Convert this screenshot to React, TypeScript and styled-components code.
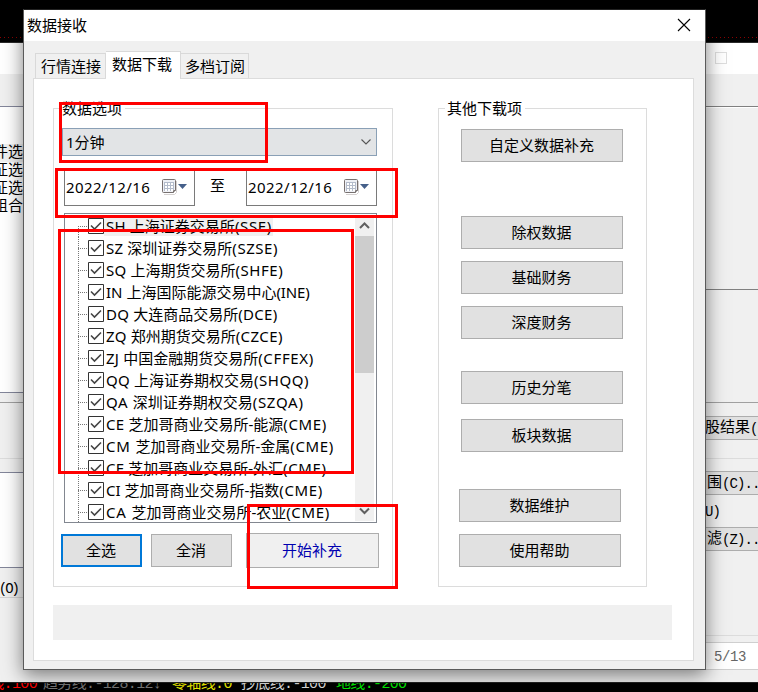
import React from "react";
import styled, { createGlobalStyle, css } from "styled-components";

const Global = createGlobalStyle`
  *, *::before, *::after { box-sizing: border-box; }
  body {
    margin: 0;
    background: #000;
    color: #000;
    font: 15px/18px "Noto Sans", "Noto Sans CJK SC", sans-serif;
  }
`;

const Screen = styled.div`
  position: relative;
  width: 758px;
  height: 692px;
  overflow: hidden;
  background: #000;
`;

/* ---------- window behind the dialog ---------- */

const Ticker = styled.div`
  height: 42px;
  padding-top: 37px;
  &::after {
    content: "";
    display: block;
    height: 1px;
    background: repeating-linear-gradient(90deg, #8c0000 0 1px, transparent 1px 4px);
  }
`;

const BackWindow = styled.div`
  display: flex;
  justify-content: space-between;
  height: 640px;
  border-top: 1px solid #2a2a2a;
  background: #f0f0f0;
`;

const Side = styled.div<{ $w: number }>`
  display: flex;
  flex-direction: column;
  width: ${(p) => p.$w}px;
  overflow: hidden;
`;

const Band = styled.div<{ $h: number; $bg?: string; $line?: string }>`
  flex: none;
  height: ${(p) => p.$h}px;
  background: ${(p) => p.$bg ?? "#f0f0f0"};
  ${(p) => p.$line && css`border-bottom: 1px solid ${p.$line};`}
`;

const SideItem = styled.div<{ $on?: boolean }>`
  display: flex;
  justify-content: flex-end;
  height: 18px;
  font: 15px/20px "Liberation Mono", "Noto Sans CJK SC", monospace;
  white-space: nowrap;
  background: ${(p) => (p.$on ? "#f0f0f0" : "transparent")};
`;

const SideList = styled.div`
  height: 285px;
  padding-top: 37px;
  background: #fff;
`;

const Mono = styled.div<{ $h: number; $pad?: number; $end?: boolean; $btn?: boolean }>`
  flex: none;
  display: flex;
  align-items: center;
  justify-content: ${(p) => (p.$end ? "flex-end" : "flex-start")};
  height: ${(p) => p.$h}px;
  padding: ${(p) => (p.$end ? `2px ${p.$pad ?? 0}px 0 0` : `2px 0 0 ${p.$pad ?? 0}px`)};
  font: 15px/18px "Liberation Mono", "Noto Sans CJK SC", monospace;
  white-space: nowrap;
  ${(p) => p.$btn && css`
    background: #e1e1e1;
    border: solid #adadad;
    border-width: 1px 0;
  `}
`;

const Narrow = styled.span`
  font-size: 14px;
  letter-spacing: -0.9px;
`;

const Tight = styled.span`
  font-size: 14px;
  letter-spacing: -2px;
`;

const MaxBox = styled.div`
  height: 31px;
  padding: 9px 0 0 10px;
  background: #fff;
  &::after {
    content: "";
    display: block;
    width: 12px;
    height: 12px;
    border: 1px solid #dedede;
  }
`;

const Status = styled.div`
  flex: none;
  display: flex;
  align-items: center;
  height: 28px;
  padding: 2px 0 0 9px;
  border: solid #cfcfcf;
  border-width: 1px 0;
  background: #fff;
  color: #666;
  font: 14px/18px "Liberation Mono", monospace;
  letter-spacing: -0.4px;
`;

const Legends = styled.div`
  display: flex;
  height: 10px;
  overflow: hidden;
  border-top: 1px solid #222;
  font: 15px/20px "Liberation Mono", "Noto Sans CJK SC", monospace;
  white-space: pre;
`;

const Indicator = styled.span<{ $c: string; $w: number; $end?: boolean; $pad?: number }>`
  flex: none;
  display: flex;
  justify-content: ${(p) => (p.$end ? "flex-end" : "flex-start")};
  width: ${(p) => p.$w}px;
  height: 20px;
  margin-top: -8px;
  padding-left: ${(p) => p.$pad ?? 0}px;
  color: ${(p) => p.$c};
  letter-spacing: -0.65px;
`;

/* ---------- dialog ---------- */

const Dialog = styled.section`
  position: absolute;
  left: 23px;
  top: 9px;
  width: 683px;
  height: 661px;
  display: flex;
  flex-direction: column;
  border: 1px solid #5a5a5a;
  border-top-color: #222;
  background: #f0f0f0;
  box-shadow: 0 5px 18px rgba(0, 0, 0, 0.5);
`;

const TitleBar = styled.header`
  display: flex;
  justify-content: space-between;
  height: 31px;
  padding: 6px 14px 0 3px;
  background: #fff;
`;

const CloseIcon = styled.svg`
  width: 14px;
  height: 14px;
  margin-top: 2px;
`;

const Tabs = styled.nav`
  display: flex;
  align-items: flex-end;
  height: 37px;
  padding-left: 11px;
`;

const Tab = styled.div<{ $w: number; $active?: boolean; $pad: number }>`
  width: ${(p) => p.$w}px;
  height: ${(p) => (p.$active ? 28 : 25)}px;
  padding: 3px 0 0 ${(p) => p.$pad}px;
  border: 1px solid #d9d9d9;
  border-bottom: 0;
  background: ${(p) => (p.$active ? "#fff" : "#f0f0f0")};
  white-space: nowrap;
  ${(p) => p.$active ? css`margin-bottom: -1px; z-index: 1;` : css`& + & { border-left: 0; }`}
`;

const Page = styled.div`
  height: 583px;
  width: 661px;
  margin-left: 9px;
  padding: 29px 0 0 19px;
  border: 1px solid #dcdcdc;
  background: #fff;
`;

const Groups = styled.div`
  display: flex;
  gap: 45px;
`;

const Group = styled.div<{ $w: number; $pad: string }>`
  width: ${(p) => p.$w}px;
  height: 479px;
  padding: ${(p) => p.$pad};
  border: 1px solid #dcdcdc;
`;

const Legend = styled.div<{ $w: number; $pad: number }>`
  width: ${(p) => p.$w}px;
  height: 20px;
  margin-top: -11px;
  padding: 1px 0 0 ${(p) => p.$pad}px;
  background: #fff;
  white-space: nowrap;
`;

const Combo = styled.div`
  display: flex;
  align-items: center;
  justify-content: space-between;
  width: 315px;
  height: 28px;
  margin: 10px 0 0 1px;
  padding: 0 5px 1px 3px;
  border: 1px solid #8aa0b6;
  background: #e2e4e6;
`;

const DateRow = styled.div`
  display: flex;
  width: 313px;
  height: 36px;
  margin: 14px 0 0 3px;
`;

const DateField = styled.div`
  display: flex;
  align-items: center;
  width: 131px;
  padding: 0 0 2px 1px;
  border: 1px solid #7a7a7a;
  letter-spacing: 0.45px;
`;

const DateText = styled.span`
  width: 95px;
`;

const Until = styled.span`
  width: 51px;
  padding: 6px 6px 0 0;
  text-align: center;
`;

const ListBox = styled.div`
  display: flex;
  width: 313px;
  height: 310px;
  margin: 7px 0 0 3px;
  padding: 1px 2px 0 0;
  border: 1px solid #828790;
  overflow: hidden;
`;

const Tree = styled.div`
  flex: 1;
  height: 308px;
  padding-left: 13px;
  overflow: hidden;
`;

const Node = styled.div`
  display: flex;
  align-items: center;
  height: 22px;
  background: repeating-linear-gradient(180deg, #777 0 1px, transparent 1px 2px) 0 0 / 1px 22px no-repeat;
  &:first-child { background-position: 0 11px; }
`;

const Branch = styled.span`
  width: 10px;
  height: 1px;
  background: repeating-linear-gradient(90deg, #777 0 1px, transparent 1px 2px);
`;

const Check = styled.svg`
  width: 16px;
  height: 16px;
`;

const NodeLabel = styled.span<{ $on?: boolean }>`
  height: 20px;
  padding: 1px 1px 0 2px;
  background: ${(p) => (p.$on ? "#f0f0f0" : "transparent")};
  white-space: pre;
`;

const Latin = styled.span<{ $ls: number }>`
  letter-spacing: ${(p) => p.$ls}px;
`;

const Scroll = styled.div`
  display: flex;
  flex-direction: column;
  width: 19px;
  height: 306px;
  background: #f0f0f0;
`;

const ScrollArrow = styled.svg`
  flex: none;
  width: 19px;
  height: 21px;
`;

const Thumb = styled.div`
  height: 137px;
  margin-bottom: auto;
  background: #cdcdcd;
`;

const Actions = styled.div`
  display: flex;
  align-items: center;
  height: 35px;
  margin-top: 10px;
`;

const Button = styled.div<{ $w?: number; $kind?: "focus" | "start"; $mt?: number; $ml?: number }>`
  display: flex;
  align-items: center;
  justify-content: center;
  width: ${(p) => p.$w ?? 162}px;
  height: ${(p) => (p.$kind === "start" ? 35 : 33)}px;
  margin: ${(p) => p.$mt ?? 0}px 0 0 ${(p) => p.$ml ?? 0}px;
  padding: 0 1px 1px 0;
  border: ${(p) => (p.$kind === "focus" ? "2px solid #0078d7" : "1px solid #adadad")};
  background: ${(p) => (p.$kind === "start" ? "#f0f0f0" : "#e1e1e1")};
  color: ${(p) => (p.$kind === "start" ? "#0000b0" : "#000")};
`;

const Progress = styled.div`
  width: 619px;
  height: 35px;
  margin-top: 18px;
  background: #f0f0f0;
`;

/* ---------- highlight frames ---------- */

const Frame = styled.div<{ $x: number; $y: number; $w: number; $h: number }>`
  position: absolute;
  left: ${(p) => p.$x}px;
  top: ${(p) => p.$y}px;
  width: ${(p) => p.$w}px;
  height: ${(p) => p.$h}px;
  border: 3px solid #f00;
`;

type Exchange = { code: string; name: string; tag: string; head: number; tail: number };

const exchanges: Exchange[] = [
  { code: "SH", name: "上海证券交易所", tag: "(SSE)", head: 0.2, tail: 0.65 },
  { code: "SZ", name: "深圳证券交易所", tag: "(SZSE)", head: 0.2, tail: 0.55 },
  { code: "SQ", name: "上海期货交易所", tag: "(SHFE)", head: 0.2, tail: 0.55 },
  { code: "IN", name: "上海国际能源交易中心", tag: "(INE)", head: 0, tail: -0.1 },
  { code: "DQ", name: "大连商品交易所", tag: "(DCE)", head: 0.2, tail: 0.3 },
  { code: "ZQ", name: "郑州期货交易所", tag: "(CZCE)", head: 0.2, tail: 0.4 },
  { code: "ZJ", name: "中国金融期货交易所", tag: "(CFFEX)", head: 0.2, tail: 0.65 },
  { code: "QQ", name: "上海证券期权交易", tag: "(SHQQ)", head: 0.2, tail: 0.55 },
  { code: "QA", name: "深圳证券期权交易", tag: "(SZQA)", head: 0.6, tail: 0.7 },
  { code: "CE", name: "芝加哥商业交易所-能源", tag: "(CME)", head: 0.25, tail: 0.65 },
  { code: "CM", name: "芝加哥商业交易所-金属", tag: "(CME)", head: 0.8, tail: 0.65 },
  { code: "CF", name: "芝加哥商业交易所-外汇", tag: "(CME)", head: 0.35, tail: 0.65 },
  { code: "CI", name: "芝加哥商业交易所-指数", tag: "(CME)", head: 0, tail: 0.65 },
  { code: "CA", name: "芝加哥商业交易所-农业", tag: "(CME)", head: 0.8, tail: 0.65 },
];

function CalendarIcon() {
  return (
    <svg width="28" height="18" viewBox="0 0 28 18">
      <path d="M3 16.500h10.500l2-2V3" fill="none" stroke="#d4d0d0" />
      <path d="M1.500 2.500q0-1 1-1h11q1 0 1 1v10l-2 2h-10q-1 0-1-1z" fill="#eef0f5" stroke="#77706f" />
      <path d="M3 4h10v9H3z" fill="#fff" />
      <path d="M3 4.500h10M3 7.500h10M3 10.500h10M3.500 4v9M6.500 4v9M9.500 4v9M12.500 4v8" stroke="#b4bccb" fill="none" />
      <path d="M12.500 14.500v-2h2" fill="#ddd" stroke="#77706f" />
      <path d="M17 6h9l-4.500 5z" fill="#46608a" />
    </svg>
  );
}

function DateInput() {
  return (
    <DateField>
      <DateText>2022/12/16</DateText>
      <CalendarIcon />
    </DateField>
  );
}

export default function App() {
  return (
    <Screen>
      <Global />
      <Ticker />
      <BackWindow>
        <Side $w={23}>
          <Band $h={31} $bg="#fff" />
          <Band $h={33} $line="#83869a" />
          <SideList>
            <SideItem $on>件选</SideItem>
            <SideItem>征选</SideItem>
            <SideItem>征选</SideItem>
            <SideItem>组合</SideItem>
          </SideList>
          <Band $h={1} $bg="#83869a" />
          <Band $h={10} $line="#a0a0a0" />
          <Band $h={56} $line="#dcdcdc" />
          <Band $h={14} $line="#83869a" />
          <Band $h={95} $bg="#fff" $line="#83869a" />
          <Band $h={10} />
          <Mono $h={19} $end $pad={5}><Tight>(O)</Tight></Mono>
          <Band $h={1} $bg="#d4d4d4" />
        </Side>
        <Side $w={53}>
          <MaxBox />
          <Band $h={33} $line="#808080" />
          <Band $h={1} $bg="#fff" />
          <Band $h={182} $line="#808080" />
          <Band $h={113} $line="#a0a0a0" />
          <Band $h={13} />
          <Mono $h={24} $btn>股结果<Narrow>(I)</Narrow></Mono>
          <Band $h={19} $line="#dcdcdc" />
          <Band $h={12} />
          <Mono $h={24} $btn $pad={2}>围<Narrow>(C)...</Narrow></Mono>
          <Mono $h={32}><Narrow>U)</Narrow></Mono>
          <Mono $h={24} $btn $pad={2}>滤<Narrow>(Z)...</Narrow></Mono>
          <Band $h={85} $line="#dcdcdc" />
          <Band $h={6} />
          <Status>5/13</Status>
        </Side>
      </BackWindow>
      <Legends>
        <Indicator $c="#f00" $w={37} $end>线:100</Indicator>
        <Indicator $c="#777" $w={135} $pad={6}>趋势线:-128.12↓</Indicator>
        <Indicator $c="#ee0" $w={69}>零轴线:0</Indicator>
        <Indicator $c="#ddd" $w={95}>抄底线:-100</Indicator>
        <Indicator $c="#0e0" $w={90}>地线:-200</Indicator>
      </Legends>

      <Dialog>
        <TitleBar>
          <span>数据接收</span>
          <CloseIcon viewBox="0 0 14 14">
            <path d="M1 1l12 12M13 1L1 13" stroke="#000" strokeWidth="1.1" />
          </CloseIcon>
        </TitleBar>
        <Tabs>
          <Tab $w={71} $pad={5}>行情连接</Tab>
          <Tab $w={75} $pad={6} $active>数据下载</Tab>
          <Tab $w={68} $pad={4}>多档订阅</Tab>
        </Tabs>
        <Page>
          <Groups>
            <Group $w={340} $pad="0 0 0 7px">
              <Legend $w={64} $pad={1}>数据选项</Legend>
              <Combo>
                1分钟
                <svg width="10" height="6" viewBox="0 0 10 6">
                  <path d="M.5.5L5 5 9.500.5" fill="none" stroke="#555" strokeWidth="1.1" />
                </svg>
              </Combo>
              <DateRow>
                <DateInput />
                <Until>至</Until>
                <DateInput />
              </DateRow>
              <ListBox>
                <Tree>
                  {exchanges.map((x, i) => (
                    <Node key={x.code}>
                      <Branch />
                      <Check viewBox="0 0 16 16">
                        <path d="M.5.5h15v15H.5z" fill="#fff" stroke="#333" />
                        <path d="M3 7.500l3.500 3.500L13 4.500" fill="none" stroke="#444" strokeWidth="1.600" />
                      </Check>
                      <NodeLabel $on={i === 0}>
                        <Latin $ls={x.head}>{x.code + " "}</Latin>
                        {x.name}
                        <Latin $ls={x.tail}>{x.tag}</Latin>
                      </NodeLabel>
                    </Node>
                  ))}
                </Tree>
                <Scroll>
                  <ScrollArrow viewBox="0 0 19 21">
                    <path d="M5 13L9.500 8.500l4.500 4.500" fill="none" stroke="#606060" strokeWidth="2" />
                  </ScrollArrow>
                  <Thumb />
                  <ScrollArrow viewBox="0 0 19 21">
                    <path d="M5 8.500L9.500 13l4.500-4.500" fill="none" stroke="#606060" strokeWidth="2" />
                  </ScrollArrow>
                </Scroll>
              </ListBox>
              <Actions>
                <Button $w={81} $kind="focus">全选</Button>
                <Button $w={81} $ml={9}>全消</Button>
                <Button $w={133} $ml={14} $kind="start">开始补充</Button>
              </Actions>
            </Group>
            <Group $w={209} $pad="0 0 0 6px">
              <Legend $w={80} $pad={2}>其他下载项</Legend>
              <Button $ml={16} $mt={11}>自定义数据补充</Button>
              <Button $ml={16} $mt={54}>除权数据</Button>
              <Button $ml={16} $mt={12}>基础财务</Button>
              <Button $ml={16} $mt={12}>深度财务</Button>
              <Button $ml={16} $mt={32}>历史分笔</Button>
              <Button $ml={16} $mt={15}>板块数据</Button>
              <Button $ml={14} $mt={37}>数据维护</Button>
              <Button $ml={14} $mt={12}>使用帮助</Button>
            </Group>
          </Groups>
          <Progress />
        </Page>
      </Dialog>

      <Frame $x={59} $y={102} $w={209} $h={61} />
      <Frame $x={55} $y={168} $w={343} $h={50} />
      <Frame $x={58} $y={229} $w={296} $h={245} />
      <Frame $x={247} $y={504} $w={151} $h={85} />
    </Screen>
  );
}
